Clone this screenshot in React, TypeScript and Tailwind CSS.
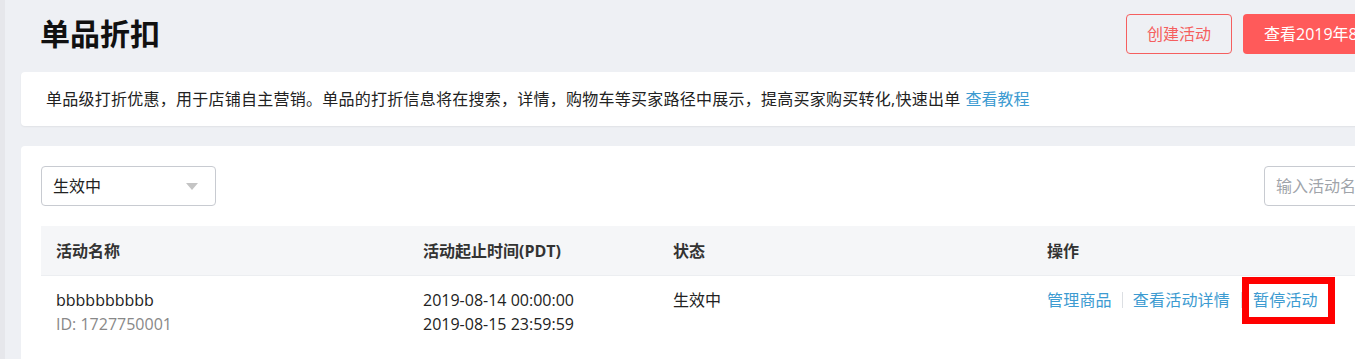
import React from "react";

export default function App() {
  const font = { fontFamily: '"Open Sans", "Noto Sans CJK SC", sans-serif' };
  return (
    <div
      className="w-[1355px] h-[359px] overflow-hidden bg-[#eef0f4] flex text-[16px] text-[#333]"
      style={font}
    >
      <div className="w-[5px] shrink-0 bg-[#e6e7eb]" />
      <div className="w-[1480px] shrink-0 pl-[16px]">
        {/* Title row */}
        <div className="h-[72px] flex items-center justify-between pl-[19px] pr-[42px]">
          <h1 className="text-[30px] font-bold text-[#111] leading-none -mt-[4px]">单品折扣</h1>
          <div className="flex items-center gap-[11px] -mt-[5px]">
            <button className="h-[40px] w-[106px] rounded-[4px] border border-[#f55f5f] text-[#f55f5f] bg-transparent text-[16px]">
              创建活动
            </button>
            <button className="h-[40px] w-[200px] rounded-[4px] bg-[#ff5a5a] text-white text-[16px] text-left pl-[21px]">
              查看2019年8月活动
            </button>
          </div>
        </div>

        {/* Info card */}
        <div className="h-[54px] bg-white rounded-[4px] shadow-[0_1px_2px_rgba(0,0,0,0.06)] flex items-center pl-[25px] text-[#222] leading-[24px]">
          <span className="tracking-[0.25px]">
            单品级打折优惠，用于店铺自主营销。单品的打折信息将在搜索，详情，购物车等买家路径中展示，提高买家购买转化,快速出单
          </span>
          <span className="ml-[5px] text-[#3d9bd1]">查看教程</span>
        </div>

        {/* Main card */}
        <div className="mt-[20px] bg-white rounded-[4px] p-[20px] h-[260px]">
          <div className="flex items-center justify-between">
            <div className="w-[175px] h-[40px] border border-[#c8cbd1] rounded-[4px] flex items-center justify-between pl-[11px] pr-[17px]">
              <span className="text-[#222]">生效中</span>
              <span className="w-0 h-0 border-l-[6px] border-r-[6px] border-t-[7px] border-l-transparent border-r-transparent border-t-[#c4c4c4]" />
            </div>
            <div className="w-[201px] h-[40px] border border-[#c8cbd1] rounded-[4px] flex items-center pl-[11px] text-[#a0a4aa]">
              输入活动名称
            </div>
          </div>

          {/* Table header */}
          <div className="mt-[20px] h-[50px] bg-[#f5f6f8] border-b border-[#eceef1] flex items-center font-bold text-[#333]">
            <div className="w-[367px] pl-[15px]">活动名称</div>
            <div className="w-[250px] pl-[15px]">活动起止时间(PDT)</div>
            <div className="w-[375px] pl-[15px]">状态</div>
            <div className="pl-[14px]">操作</div>
          </div>

          {/* Row */}
          <div className="flex pt-[12px] leading-[24px] text-[#222]">
            <div className="w-[367px] pl-[15px]">
              <div>bbbbbbbbbb</div>
              <div className="text-[#888]">ID: 1727750001</div>
            </div>
            <div className="w-[250px] pl-[15px]">
              <div>2019-08-14 00:00:00</div>
              <div>2019-08-15 23:59:59</div>
            </div>
            <div className="w-[375px] pl-[15px]">生效中</div>
            <div className="pl-[14px] flex items-start text-[#3d9bd1] tracking-[0.2px]">
              <span>管理商品</span>
              <span className="mx-[10px] mt-[4px] w-px h-[16px] bg-[#dcdfe3]" />
              <span>查看活动详情</span>
              <span className="ml-[11px] mr-[11px] mt-[4px] w-px h-[16px] bg-[#dcdfe3]" />
              <span className="relative">
                暂停活动
                <span className="absolute -left-[11px] -right-[17px] -top-[11px] -bottom-[12px] border-[7px] border-[#ff0000]" />
              </span>
            </div>
          </div>
        </div>
      </div>
    </div>
  );
}
